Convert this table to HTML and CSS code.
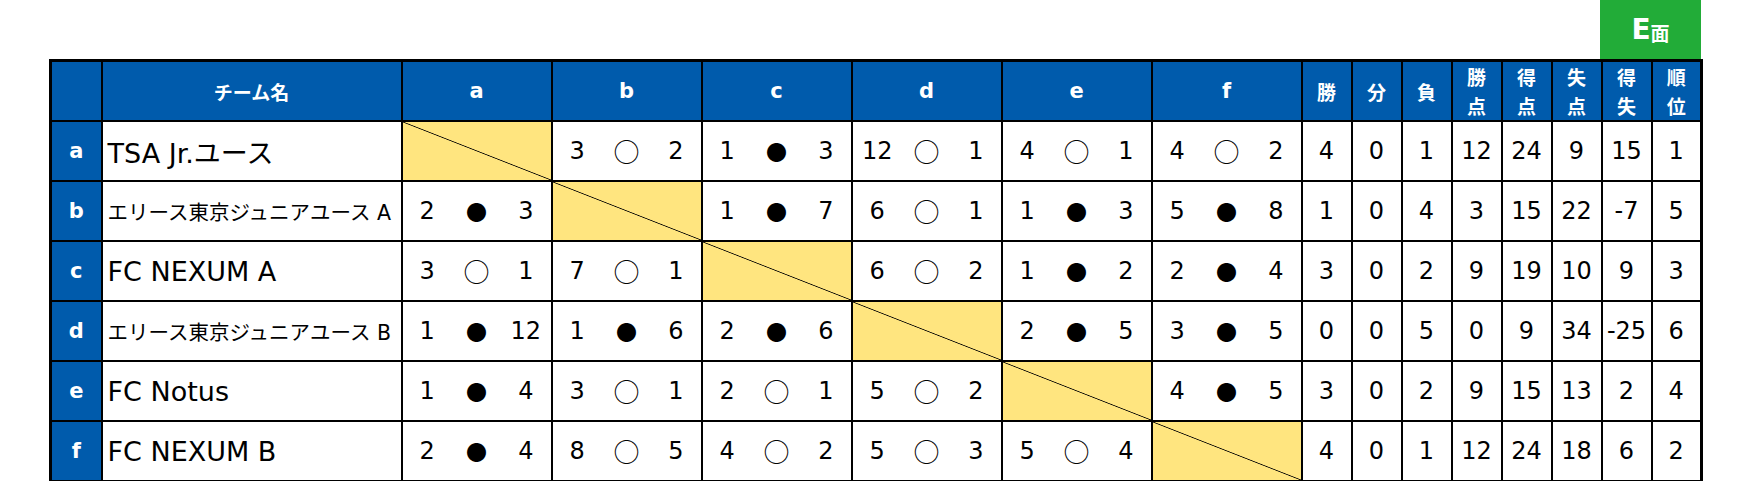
FILE: index.html
```html
<!DOCTYPE html>
<html lang="ja">
<head>
<meta charset="utf-8">
<title>E面 リーグ表</title>
<link rel="stylesheet" href="styles.css">
</head>
<body>
<div class="page">
  <div class="face-row"><div class="face"><span class="face-e">E</span><span class="face-k">面</span></div></div>
  <table class="league">
    <colgroup>
      <col class="c-key"><col class="c-name">
      <col class="c-match"><col class="c-match"><col class="c-match"><col class="c-match"><col class="c-match"><col class="c-match">
      <col class="c-stat"><col class="c-stat"><col class="c-stat"><col class="c-stat"><col class="c-stat"><col class="c-stat"><col class="c-stat"><col class="c-stat">
    </colgroup>
    <thead>
      <tr>
        <th></th><th class="jp">チーム名</th>
        <th>a</th><th>b</th><th>c</th><th>d</th><th>e</th><th>f</th>
        <th class="jp">勝</th><th class="jp">分</th><th class="jp">負</th>
        <th class="jp two">勝<br>点</th><th class="jp two">得<br>点</th><th class="jp two">失<br>点</th><th class="jp two">得<br>失</th><th class="jp two">順<br>位</th>
      </tr>
    </thead>
    <tbody>
      <tr>
        <th class="key">a</th><td class="name">TSA Jr.ユース</td>
        <td class="diag"></td>
        <td><div class="m"><span>3</span><span class="o">○</span><span>2</span></div></td>
        <td><div class="m"><span>1</span><span class="x">●</span><span>3</span></div></td>
        <td><div class="m"><span>12</span><span class="o">○</span><span>1</span></div></td>
        <td><div class="m"><span>4</span><span class="o">○</span><span>1</span></div></td>
        <td><div class="m"><span>4</span><span class="o">○</span><span>2</span></div></td>
        <td class="s">4</td><td class="s">0</td><td class="s">1</td><td class="s">12</td><td class="s">24</td><td class="s">9</td><td class="s">15</td><td class="s">1</td>
      </tr>
      <tr>
        <th class="key">b</th><td class="name small">エリース東京ジュニアユース A</td>
        <td><div class="m"><span>2</span><span class="x">●</span><span>3</span></div></td>
        <td class="diag"></td>
        <td><div class="m"><span>1</span><span class="x">●</span><span>7</span></div></td>
        <td><div class="m"><span>6</span><span class="o">○</span><span>1</span></div></td>
        <td><div class="m"><span>1</span><span class="x">●</span><span>3</span></div></td>
        <td><div class="m"><span>5</span><span class="x">●</span><span>8</span></div></td>
        <td class="s">1</td><td class="s">0</td><td class="s">4</td><td class="s">3</td><td class="s">15</td><td class="s">22</td><td class="s">-7</td><td class="s">5</td>
      </tr>
      <tr>
        <th class="key">c</th><td class="name">FC NEXUM A</td>
        <td><div class="m"><span>3</span><span class="o">○</span><span>1</span></div></td>
        <td><div class="m"><span>7</span><span class="o">○</span><span>1</span></div></td>
        <td class="diag"></td>
        <td><div class="m"><span>6</span><span class="o">○</span><span>2</span></div></td>
        <td><div class="m"><span>1</span><span class="x">●</span><span>2</span></div></td>
        <td><div class="m"><span>2</span><span class="x">●</span><span>4</span></div></td>
        <td class="s">3</td><td class="s">0</td><td class="s">2</td><td class="s">9</td><td class="s">19</td><td class="s">10</td><td class="s">9</td><td class="s">3</td>
      </tr>
      <tr>
        <th class="key">d</th><td class="name small">エリース東京ジュニアユース B</td>
        <td><div class="m"><span>1</span><span class="x">●</span><span>12</span></div></td>
        <td><div class="m"><span>1</span><span class="x">●</span><span>6</span></div></td>
        <td><div class="m"><span>2</span><span class="x">●</span><span>6</span></div></td>
        <td class="diag"></td>
        <td><div class="m"><span>2</span><span class="x">●</span><span>5</span></div></td>
        <td><div class="m"><span>3</span><span class="x">●</span><span>5</span></div></td>
        <td class="s">0</td><td class="s">0</td><td class="s">5</td><td class="s">0</td><td class="s">9</td><td class="s">34</td><td class="s">-25</td><td class="s">6</td>
      </tr>
      <tr>
        <th class="key">e</th><td class="name">FC Notus</td>
        <td><div class="m"><span>1</span><span class="x">●</span><span>4</span></div></td>
        <td><div class="m"><span>3</span><span class="o">○</span><span>1</span></div></td>
        <td><div class="m"><span>2</span><span class="o">○</span><span>1</span></div></td>
        <td><div class="m"><span>5</span><span class="o">○</span><span>2</span></div></td>
        <td class="diag"></td>
        <td><div class="m"><span>4</span><span class="x">●</span><span>5</span></div></td>
        <td class="s">3</td><td class="s">0</td><td class="s">2</td><td class="s">9</td><td class="s">15</td><td class="s">13</td><td class="s">2</td><td class="s">4</td>
      </tr>
      <tr>
        <th class="key">f</th><td class="name">FC NEXUM B</td>
        <td><div class="m"><span>2</span><span class="x">●</span><span>4</span></div></td>
        <td><div class="m"><span>8</span><span class="o">○</span><span>5</span></div></td>
        <td><div class="m"><span>4</span><span class="o">○</span><span>2</span></div></td>
        <td><div class="m"><span>5</span><span class="o">○</span><span>3</span></div></td>
        <td><div class="m"><span>5</span><span class="o">○</span><span>4</span></div></td>
        <td class="diag"></td>
        <td class="s">4</td><td class="s">0</td><td class="s">1</td><td class="s">12</td><td class="s">24</td><td class="s">18</td><td class="s">6</td><td class="s">2</td>
      </tr>
    </tbody>
  </table>
</div>
</body>
</html>
```
FILE: styles.css
```css
html, body {
  margin: 0;
  padding: 0;
  background: #ffffff;
}

body {
  font-family: "DejaVu Sans", "Noto Sans CJK JP", sans-serif;
  color: #000;
}

.page {
  width: 1652px;
  margin-left: 49px;
}

.face-row {
  display: flex;
  justify-content: flex-end;
}

.face {
  width: 101px;
  height: 59px;
  background: #22ac38;
  color: #fff;
  display: flex;
  align-items: center;
  justify-content: center;
  font-weight: bold;
}

.face-e {
  font-size: 28px;
  font-family: "DejaVu Sans", sans-serif;
}

.face-k {
  font-size: 19px;
  font-family: "Noto Sans CJK JP", sans-serif;
  margin-top: 6px;
}

.league {
  width: 1652px;
  table-layout: fixed;
  border-collapse: collapse;
  border: 3px solid #000;
}

.c-key { width: 51px; }
.c-name { width: 300px; }
.c-match { width: 150px; }
.c-stat { width: 50px; }

.league th,
.league td {
  border: 2px solid #000;
  padding: 0;
  height: 58px;
  text-align: center;
  vertical-align: middle;
}

.league thead th {
  background: #005bac;
  color: #fff;
  font-weight: bold;
  font-size: 21px;
}

.league thead th.jp {
  font-family: "Noto Sans CJK JP", sans-serif;
  font-size: 19px;
  line-height: 29px;
}

.league th.key {
  background: #005bac;
  color: #fff;
  font-weight: bold;
  font-size: 21px;
}

.league td.name {
  text-align: left;
  padding-left: 5px;
  font-size: 27px;
  white-space: nowrap;
}

.league td.name.small {
  font-size: 20.5px;
}

.league td.s {
  font-size: 24px;
}

.league td.diag {
  background: #ffe57f linear-gradient(to top right, transparent calc(50% - 0.8px), #000 50%, transparent calc(50% + 0.8px));
}

.m {
  display: grid;
  grid-template-columns: 1fr 1fr 1fr;
  align-items: center;
  font-size: 24px;
}

.m span {
  text-align: center;
}

.m .o {
  font-family: "Noto Sans CJK JP", sans-serif;
  font-size: 26px;
  line-height: 1;
}

.m .x {
  font-family: "Noto Sans CJK JP", sans-serif;
  font-size: 21px;
  line-height: 1;
}
```
